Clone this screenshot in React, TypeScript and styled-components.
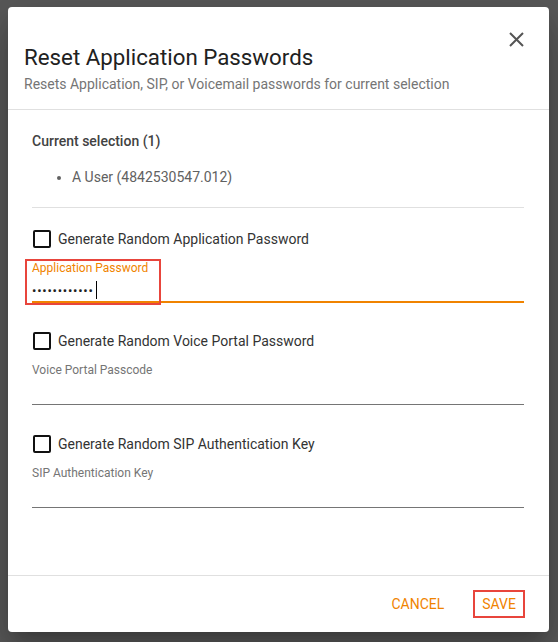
import * as React from 'react';
import styled, { createGlobalStyle } from 'styled-components';

const accent = '#f08300';
const annotate = '#e8453c';

const GlobalStyle = createGlobalStyle`
  html, body {
    margin: 0;
    padding: 0;
    background: #595959;
    font-family: Roboto, "Liberation Sans", Arial, sans-serif;
  }
  * { box-sizing: border-box; }
`;

const Backdrop = styled.div`
  min-height: 642px;
  padding: 7px 9px 10px 8px;
`;

const Dialog = styled.div`
  width: 541px;
  height: 625px;
  background: #fff;
  border-radius: 4px;
  box-shadow: 0 11px 15px -7px rgba(0, 0, 0, 0.2), 0 24px 38px 3px rgba(0, 0, 0, 0.14),
    0 9px 46px 8px rgba(0, 0, 0, 0.12);
  display: flex;
  flex-direction: column;
`;

const Header = styled.header`
  position: relative;
  padding: 36px 24px 15px 16px;
  border-bottom: 1px solid #e0e0e0;
`;

const Title = styled.h2`
  margin: 0;
  font-size: 22.3px;
  line-height: 28px;
  font-weight: 400;
  color: #212121;
`;

const Subtitle = styled.p`
  margin: 3px 0 0;
  font-size: 14px;
  line-height: 20px;
  color: #757575;
`;

const CloseButton = styled.button`
  position: absolute;
  top: 22px;
  right: 23px;
  width: 20px;
  height: 20px;
  padding: 0;
  border: 0;
  background: none;
  display: flex;
  align-items: center;
  justify-content: center;
  cursor: pointer;
`;

const Body = styled.div`
  flex: 1;
  padding: 21px 25px 0 24px;
`;

const SectionTitle = styled.div`
  font-size: 14px;
  line-height: 20px;
  font-weight: 500;
  color: #424242;
`;

const SelectionList = styled.ul`
  margin: 16px 0 0;
  padding: 0 0 20px 40px;
  border-bottom: 1px solid #e0e0e0;
  font-size: 14px;
  line-height: 20px;
  color: #616161;
`;

const Group = styled.div<{ $gap: number }>`
  margin-top: ${p => p.$gap}px;
`;

const CheckRow = styled.label`
  display: flex;
  align-items: center;
  gap: 7px;
  height: 20px;
  font-size: 14px;
  color: #333;
  cursor: pointer;
`;

const Box = styled.span`
  width: 18px;
  height: 18px;
  margin-left: 1px;
  border: 2px solid #111;
  border-radius: 2px;
`;

const Field = styled.div<{ $focused?: boolean }>`
  position: relative;
  margin-top: 12px;
  height: 42px;
  border-bottom: ${p => (p.$focused ? `2px solid ${accent}` : '1px solid #757575')};
`;

const FieldLabel = styled.div<{ $focused?: boolean }>`
  font-size: 12px;
  line-height: 14px;
  color: ${p => (p.$focused ? accent : '#757575')};
`;

const FieldValue = styled.div`
  display: flex;
  align-items: center;
  height: 24px;
  margin-top: 3px;
  font-size: 13px;
  letter-spacing: 0.75px;
  color: #212121;
`;

const Caret = styled.span`
  width: 1px;
  height: 18px;
  margin-left: 2px;
  background: #000;
`;

const Highlight = styled.div`
  position: absolute;
  left: -7px;
  top: -2px;
  width: 136px;
  height: 46px;
  border: 2px solid ${annotate};
  pointer-events: none;
`;

const Footer = styled.footer`
  height: 57px;
  border-top: 1px solid #e0e0e0;
  display: flex;
  align-items: center;
  justify-content: flex-end;
  gap: 20px;
  padding: 0 24px 0 0;
`;

const TextButton = styled.button<{ $marked?: boolean }>`
  height: 28px;
  padding: 0 7px;
  margin-top: -1px;
  border: 2px solid ${p => (p.$marked ? annotate : 'transparent')};
  background: none;
  font-family: inherit;
  font-size: 14px;
  text-transform: uppercase;
  color: ${accent};
  cursor: pointer;
`;

const groups = [
  { check: 'Generate Random Application Password', label: 'Application Password', focused: true, gap: 21 },
  { check: 'Generate Random Voice Portal Password', label: 'Voice Portal Passcode', gap: 28 },
  { check: 'Generate Random SIP Authentication Key', label: 'SIP Authentication Key', gap: 29 },
];

export default function App() {
  return (
    <>
      <GlobalStyle />
      <Backdrop>
        <Dialog>
          <Header>
            <Title>Reset Application Passwords</Title>
            <Subtitle>Resets Application, SIP, or Voicemail passwords for current selection</Subtitle>
            <CloseButton aria-label="Close">
              <svg width="15" height="15" viewBox="0 0 15 15">
                <path d="M1 1L14 14M14 1L1 14" stroke="#555" strokeWidth="2" />
              </svg>
            </CloseButton>
          </Header>
          <Body>
            <SectionTitle>Current selection (1)</SectionTitle>
            <SelectionList>
              <li>A User (4842530547.012)</li>
            </SelectionList>
            {groups.map(g => (
              <Group key={g.label} $gap={g.gap}>
                <CheckRow>
                  <Box />
                  {g.check}
                </CheckRow>
                <Field $focused={g.focused}>
                  <FieldLabel $focused={g.focused}>{g.label}</FieldLabel>
                  {g.focused && (
                    <FieldValue>
                      ••••••••••••
                      <Caret />
                    </FieldValue>
                  )}
                  {g.focused && <Highlight />}
                </Field>
              </Group>
            ))}
          </Body>
          <Footer>
            <TextButton>Cancel</TextButton>
            <TextButton $marked>Save</TextButton>
          </Footer>
        </Dialog>
      </Backdrop>
    </>
  );
}
